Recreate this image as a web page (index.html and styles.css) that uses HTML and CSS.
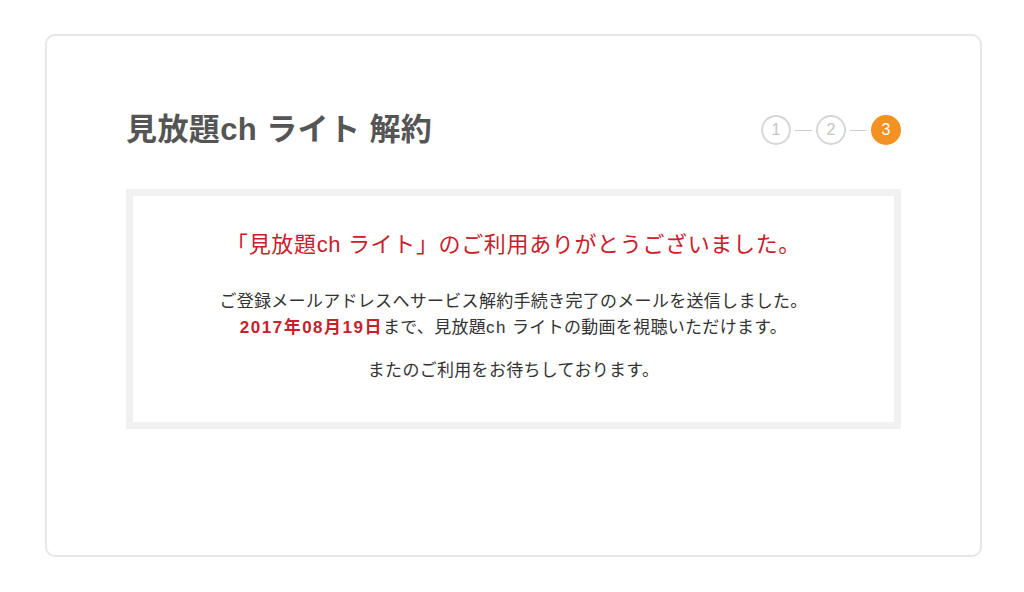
FILE: index.html
```html
<!DOCTYPE html>
<html lang="ja">
<head>
    <meta charset="UTF-8">
    <meta name="viewport" content="width=device-width, initial-scale=1.0">
    <title>見放題ch ライト 解約</title>
    <link rel="stylesheet" href="styles.css">
</head>
<body>
    <div class="cancel-card">
        <div class="cancel-header">
            <h1 class="cancel-title">見放題ch ライト 解約</h1>
            <ol class="steps">
                <li class="step">1</li>
                <li class="step-line"></li>
                <li class="step">2</li>
                <li class="step-line"></li>
                <li class="step current">3</li>
            </ol>
        </div>

        <div class="complete-box">
            <p class="complete-lead">「見放題ch ライト」のご利用ありがとうございました。</p>
            <p class="complete-text">
                ご登録メールアドレスへサービス解約手続き完了のメールを送信しました。<br>
                <strong class="deadline">2017年08月19日</strong>まで、見放題<span class="latin">ch</span> ライトの動画を視聴いただけます。
            </p>
            <p class="complete-text">またのご利用をお待ちしております。</p>
        </div>
    </div>
</body>
</html>
```

FILE: styles.css
```css
/* Cancel complete page */
body {
    margin: 0;
    padding: 34px 42px 0 45px;
    background: #fff;
    font-family: "Liberation Sans", "Noto Sans CJK JP", sans-serif;
    color: #333;
}

.cancel-card {
    border: 2px solid #e6e6e6;
    border-radius: 10px;
    padding: 74px 79px 126px 79px;
}

.cancel-header {
    display: flex;
    justify-content: space-between;
    align-items: center;
    height: 40px;
    margin-bottom: 39px;
}

.cancel-title {
    margin: 0;
    font-size: 31px;
    font-weight: bold;
    color: #555;
    line-height: 40px;
    letter-spacing: 0.4px;
}

.steps {
    display: flex;
    align-items: center;
    list-style: none;
    margin: 0;
    padding: 0;
}

.step {
    width: 26px;
    height: 26px;
    border: 2px solid #d6d6d6;
    border-radius: 50%;
    color: #c4c4c4;
    font-size: 16px;
    line-height: 26px;
    text-align: center;
}

.step.current {
    background: #f39122;
    border-color: #f39122;
    color: #fff;
}

.step-line {
    width: 17px;
    height: 1px;
    margin: 0 4px;
    background: #cfcfcf;
}

.complete-box {
    border: 7px solid #f1f1f1;
    padding: 34px 20px 38px;
    text-align: center;
}

.complete-lead {
    margin: 0 0 29px;
    font-size: 22px;
    line-height: 30px;
    letter-spacing: 0.65px;
    color: #c9202b;
}

.complete-text {
    margin: 0 0 17px;
    font-size: 17px;
    line-height: 26px;
    letter-spacing: 0.3px;
}

.complete-text:last-child {
    margin-bottom: 0;
}

.deadline {
    color: #c9202b;
    letter-spacing: 1.5px;
}

.latin {
    letter-spacing: 1.5px;
}
```
